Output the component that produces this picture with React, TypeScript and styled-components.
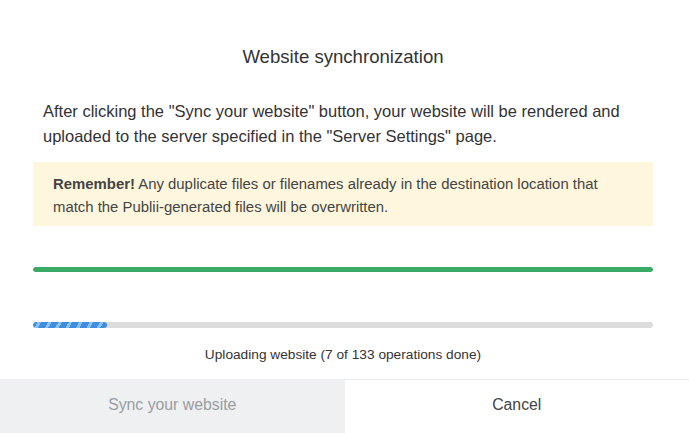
import styled, { createGlobalStyle } from 'styled-components';

const GlobalStyle = createGlobalStyle`
  html, body {
    margin: 0;
    padding: 0;
    background: #fff;
  }
  body {
    font-family: 'Liberation Sans', Arial, sans-serif;
    color: #333;
  }
`;

const Modal = styled.div`
  width: 689px;
  height: 433px;
  display: flex;
  flex-direction: column;
  background: #fff;
  overflow: hidden;
`;

const Content = styled.div`
  flex: 1;
  padding: 0 36px 0 33px;
  display: flex;
  flex-direction: column;
`;

const Title = styled.h1`
  margin: 46px 0 0;
  font-size: 18.6px;
  line-height: 22px;
  font-weight: 400;
  text-align: center;
  color: #333;
`;

const Intro = styled.p`
  margin: 31px 0 0;
  padding: 0 10px;
  font-size: 16.5px;
  line-height: 25px;
  color: #333;
`;

const Notice = styled.div`
  margin-top: 13px;
  padding: 11px 20px 7px;
  background: #fef7de;
  font-size: 14.9px;
  line-height: 23px;
  color: #444;
  b {
    font-weight: 700;
  }
`;

const Track = styled.div<{ $height: number; $top: number }>`
  margin-top: ${({ $top }) => $top}px;
  height: ${({ $height }) => $height}px;
  border-radius: 3px;
  background: #dcdcdc;
  overflow: hidden;
`;

const Fill = styled.div<{ $striped?: boolean }>`
  height: 100%;
  border-radius: 3px;
  background: ${({ $striped }) =>
    $striped
      ? 'repeating-linear-gradient(-60deg, #3e8ee0 0 6px, #8cc0f2 6px 9px)'
      : '#3aab66'};
`;

const Status = styled.div`
  margin-top: 18px;
  text-align: center;
  font-size: 13.7px;
  line-height: 18px;
  color: #333;
`;

const Footer = styled.div`
  height: 54px;
  display: flex;
`;

const FooterButton = styled.button<{ $primary?: boolean }>`
  flex: 1;
  border: 0;
  border-top: 1px solid ${({ $primary }) => ($primary ? '#eef0f2' : '#e8eaec')};
  background: ${({ $primary }) => ($primary ? '#eef0f2' : '#fff')};
  color: ${({ $primary }) => ($primary ? '#9a9ca0' : '#444')};
  font-family: 'Liberation Sans', Arial, sans-serif;
  font-size: 15.8px;
  padding: 0 0 4px;
  cursor: pointer;
`;

const App = () => {
  const done = 7;
  const total = 133;
  return (
    <Modal>
      <GlobalStyle />
      <Content>
        <Title>Website synchronization</Title>
        <Intro>
          After clicking the "Sync your website" button, your website will be rendered and
          uploaded to the server specified in the "Server Settings" page.
        </Intro>
        <Notice>
          <b>Remember!</b> Any duplicate files or filenames already in the destination location
          that match the Publii-generated files will be overwritten.
        </Notice>
        <Track $height={5} $top={41}>
          <Fill style={{ width: '100%' }} />
        </Track>
        <Track $height={6} $top={50}>
          <Fill $striped style={{ width: `${(74 / 620) * 100}%` }} />
        </Track>
        <Status>
          Uploading website ({done} of {total} operations done)
        </Status>
      </Content>
      <Footer>
        <FooterButton $primary>Sync your website</FooterButton>
        <FooterButton>Cancel</FooterButton>
      </Footer>
    </Modal>
  );
};

export default App;
